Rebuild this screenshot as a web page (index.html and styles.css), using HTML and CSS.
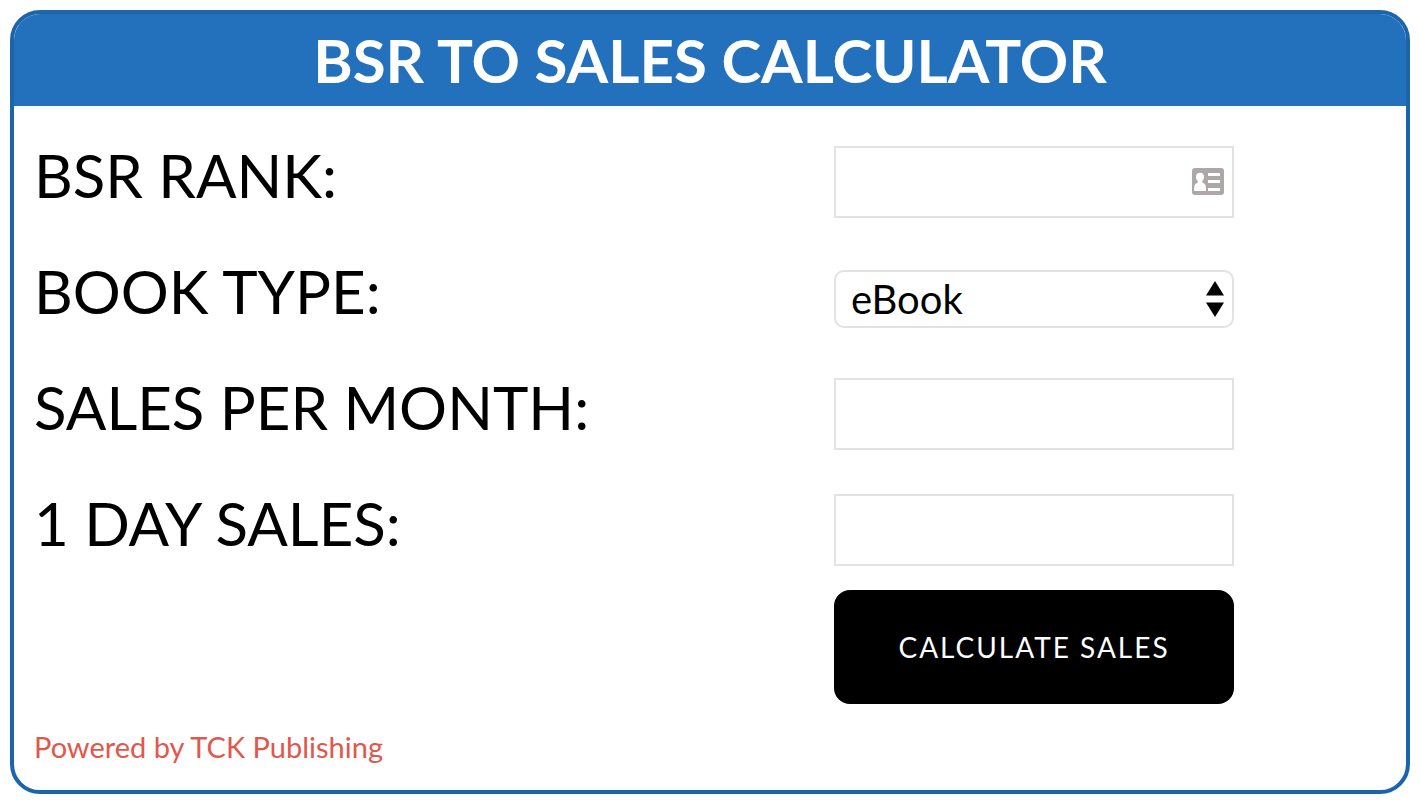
FILE: index.html
```
<!DOCTYPE html>
<html lang="en">
<head>
    <meta charset="UTF-8">
    <meta name="viewport" content="width=device-width, initial-scale=1.0">
    <title>BSR to Sales Calculator</title>
    <link rel="stylesheet" href="styles.css">
</head>
<body>
    <div id="calculator">
        <h1>BSR TO SALES CALCULATOR</h1>
        <form>
            <div class="row">
                <label for="rank">BSR RANK:</label>
                <div class="field">
                    <input type="text" id="rank">
                    <svg class="card-icon" width="32" height="27" viewBox="0 0 32 27" aria-hidden="true">
                        <rect width="32" height="27" rx="3" fill="#ada7a8"/>
                        <path d="M8 4.800c2.500 0 4 1.600 4 4 0 2-.8 3.400-1.800 4.300v1.400c2.200.7 3.800 2.200 3.800 5V23H2.200v-3.500c0-2.800 1.600-4.300 3.600-5v-1.400C4.800 12.200 4 10.800 4 8.800c0-2.400 1.500-4 4-4z" fill="#fff"/>
                        <path d="M16 5h12v3H16zM16 12h12v3H16zM16 20h12v3H16z" fill="#fff"/>
                    </svg>
                </div>
            </div>
            <div class="row">
                <label for="type">BOOK TYPE:</label>
                <div class="field select">
                    <select id="type">
                        <option>eBook</option>
                        <option>Paperback</option>
                    </select>
                    <svg class="arrows" width="18" height="36" viewBox="0 0 18 36" aria-hidden="true">
                        <path d="M9 0l9 14.500H0zM9 36l9-14.500H0z"/>
                    </svg>
                </div>
            </div>
            <div class="row">
                <label for="month">SALES PER MONTH:</label>
                <div class="field">
                    <input type="text" id="month" readonly>
                </div>
            </div>
            <div class="row">
                <label for="day">1 DAY SALES:</label>
                <div class="field">
                    <input type="text" id="day" readonly>
                </div>
            </div>
            <div class="row submit">
                <button type="button">CALCULATE SALES</button>
            </div>
        </form>
        <a class="powered" href="#">Powered by TCK Publishing</a>
    </div>
</body>
</html>
```
FILE: styles.css
```
*{
    margin: 0;
    padding: 0;
    box-sizing: border-box;
}
body{
    margin: 10px 10px 8px;
    background: #ffffff;
    color: #000000;
    font-family: Lato, "Liberation Sans", sans-serif;
}
#calculator{
    border: 4px solid #1d65a9;
    border-radius: 30px;
    overflow: hidden;
}
h1{
    padding: 10px 0;
    background: #2371bc;
    color: #ffffff;
    font-size: 60px;
    line-height: 72px;
    font-weight: bold;
    text-align: center;
}
form{
    padding: 40px 20px 0;
}
.row{
    display: grid;
    grid-template-columns: 1fr 552px;
    min-height: 72px;
    margin-bottom: 44px;
}
.row label{
    font-size: 60px;
    line-height: 58px;
}
.field{
    position: relative;
    align-self: start;
    width: 400px;
}
.field.select{
    margin-top: 8px;
}
.field input,
.field select{
    display: block;
    width: 100%;
    border: 2px solid #e2e2e2;
    background: #ffffff;
    color: #000000;
    font-family: inherit;
    font-size: 40px;
}
.field input{
    height: 72px;
    padding: 0 52px 0 15px;
}
.field select{
    height: 58px;
    padding: 0 40px 0 15px;
    border-radius: 10px;
    appearance: none;
}
/*图标盖在输入框上*/
.card-icon{
    position: absolute;
    top: 22px;
    right: 10px;
}
.arrows{
    position: absolute;
    top: 11px;
    right: 10px;
    pointer-events: none;
}
.submit{
    margin-top: -20px;
    margin-bottom: 0;
}
.submit button{
    grid-column: 2;
    width: 400px;
    height: 114px;
    border: none;
    border-radius: 16px;
    background: #000000;
    color: #ffffff;
    font-family: inherit;
    font-size: 28px;
    letter-spacing: 2px;
    cursor: pointer;
}
.powered{
    display: block;
    width: fit-content;
    margin: 25px 20px;
    color: #e2574c;
    font-size: 29px;
    line-height: 36px;
    text-decoration: none;
}
```
